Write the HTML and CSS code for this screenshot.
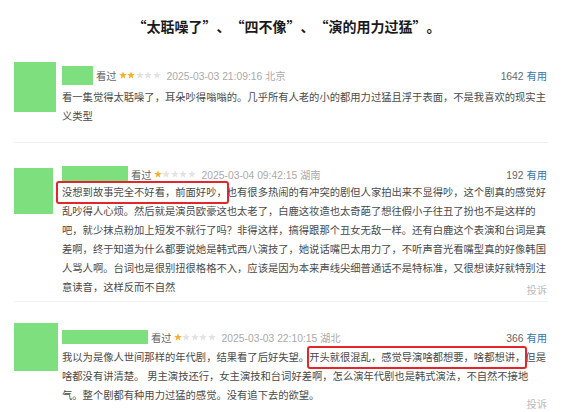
FILE: index.html
```html
<!DOCTYPE html>
<html lang="zh-CN">
<head>
  <meta charset="UTF-8">
  <meta name="viewport" content="width=device-width, initial-scale=1.0">
  <title>短评</title>
  <link rel="stylesheet" href="styles.css">
</head>
<body>
  <svg class="defs" width="0" height="0">
    <symbol id="star" viewBox="0 0 10 10">
      <polygon points="5,0.4 6.3,3.7 9.8,3.9 7,6.1 8,9.6 5,7.6 2,9.6 3,6.1 0.2,3.9 3.7,3.7"/>
    </symbol>
  </svg>

  <h1 class="title">“太聒噪了”、“四不像”、“演的用力过猛”。</h1>

  <div class="comment c1">
    <div class="avatar"></div>
    <div class="comment-body">
      <div class="comment-head">
        <span class="name"></span>
        <span class="watched">看过</span>
        <span class="stars">
          <svg class="on"><use href="#star"/></svg><svg class="on"><use href="#star"/></svg><svg><use href="#star"/></svg><svg><use href="#star"/></svg><svg><use href="#star"/></svg>
        </span>
        <span class="date">2025-03-03 21:09:16 北京</span>
        <span class="votes">1642 <a href="#">有用</a></span>
      </div>
      <p class="comment-text">看一集觉得太聒噪了，耳朵吵得嗡嗡的。几乎所有人老的小的都用力过猛且浮于表面，不是我喜欢的现实主义类型</p>
    </div>
  </div>

  <div class="comment c2">
    <div class="avatar"></div>
    <div class="comment-body">
      <div class="comment-head">
        <span class="name"></span>
        <span class="watched">看过</span>
        <span class="stars">
          <svg class="on"><use href="#star"/></svg><svg><use href="#star"/></svg><svg><use href="#star"/></svg><svg><use href="#star"/></svg><svg><use href="#star"/></svg>
        </span>
        <span class="date">2025-03-04 09:42:15 湖南</span>
        <span class="votes">192 <a href="#">有用</a></span>
      </div>
      <p class="comment-text"><span class="mark mark-wide">没想到故事完全不好看，前面好吵，</span>也有很多热闹的有冲突的剧但人家拍出来不显得吵，这个剧真的感觉好乱吵得人心烦。然后就是演员欧豪这也太老了，白鹿这妆造也太奇葩了想往假小子往丑了扮也不是这样的吧，就少抹点粉加上短发不就行了吗？非得这样，搞得跟那个丑女无敌一样。还有白鹿这个表演和台词是真差啊，终于知道为什么都要说她是韩式西八演技了，她说话嘴巴太用力了，不听声音光看嘴型真的好像韩国人骂人啊。台词也是很别扭很格格不入，应该是因为本来声线尖细普通话不是特标准，又很想读好就特别注意读音，这样反而不自然</p>
      <div class="report">投诉</div>
    </div>
  </div>

  <div class="comment c3">
    <div class="avatar"></div>
    <div class="comment-body">
      <div class="comment-head">
        <span class="name"></span>
        <span class="watched">看过</span>
        <span class="stars">
          <svg class="on"><use href="#star"/></svg><svg><use href="#star"/></svg><svg><use href="#star"/></svg><svg><use href="#star"/></svg><svg><use href="#star"/></svg>
        </span>
        <span class="date">2025-03-03 22:10:15 湖北</span>
        <span class="votes">366 <a href="#">有用</a></span>
      </div>
      <p class="comment-text">我以为是像人世间那样的年代剧，结果看了后好失望。<span class="mark">开头就很混乱，感觉导演啥都想要，啥都想讲，</span>但是啥都没有讲清楚。 男主演技还行，女主演技和台词好差啊，怎么演年代剧也是韩式演法，不自然不接地气。整个剧都有种用力过猛的感觉。没有追下去的欲望。</p>
      <div class="report">投诉</div>
    </div>
  </div>
</body>
</html>
```

FILE: styles.css
```css
body {
  margin: 0;
  background-color: #fff;
  color: #4a4a4a;
  font-family: "Liberation Sans", "Noto Sans CJK SC", sans-serif;
  text-spacing-trim: space-all;
}
.defs {
  position: absolute;
}
.title {
  margin: 0;
  padding: 17px 0;
  font-family: "Noto Sans CJK SC", sans-serif;
  font-size: 14px;
  line-height: 18px;
  font-weight: bold;
  text-align: center;
  color: #1a1a1a;
}

/* one comment: avatar column + body column */
.comment {
  display: grid;
  grid-template-columns: 48px 485px;
  align-items: start;
  margin: 0 25px 0 14px;
  border-bottom: 1px solid #f1f1f1;
  font-size: 10.3px;
}
.avatar {
  background-color: #7ddf7d;
}
.comment-head {
  display: flex;
  align-items: center;
  height: 20px;
  white-space: nowrap;
}
.name {
  background-color: #7ddf7d;
  margin-right: 3px;
}
.watched {
  color: #666;
  margin-right: 2px;
}
.stars {
  display: flex;
  gap: 0.5px;
  margin-right: 6px;
}
.stars svg {
  width: 8px;
  height: 8px;
  fill: #e3e3e3;
}
.stars svg.on {
  fill: #f5b12b;
}
.date {
  color: #aaa;
}
.votes {
  margin-left: auto;
  color: #666;
}
.votes a {
  color: #3377aa;
  text-decoration: none;
}
.comment-text {
  margin: 0;
  line-height: 19px;
}
.mark {
  border: 2px solid #e3262b;
  border-radius: 3px;
  padding: 4px 0;
  margin: 0 -2px;
}
.mark-wide {
  padding-left: 4px;
  margin-left: -6px;
}
.report {
  text-align: right;
  line-height: 14px;
  color: #bbb;
}

/* per-comment spacing and the size of each green cover */
.c1 {
  padding: 10px 0 16px;
}
.c1 .avatar {
  width: 42px;
  height: 50px;
}
.c1 .name {
  width: 31px;
  height: 19px;
}
.c1 .comment-head {
  margin-top: 3px;
}
.c1 .comment-text {
  margin-top: 3px;
}

.c2 {
  padding: 21px 0 3px;
}
.c2 .avatar {
  width: 39px;
  height: 46px;
  margin-top: 4px;
}
.c2 .name {
  width: 66px;
  height: 16px;
}
.c2 .comment-text {
  margin-top: -1px;
}
.c2 .report {
  margin-top: -13px;
}

.c3 {
  padding: 25px 0 10px;
}
.c3 .avatar {
  width: 44px;
  height: 48px;
  margin-top: -4px;
}
.c3 .name {
  width: 86px;
  height: 14px;
}
.c3 .comment-text {
  margin-top: 1px;
}
.c3 .report {
  margin-top: -7px;
}
```
